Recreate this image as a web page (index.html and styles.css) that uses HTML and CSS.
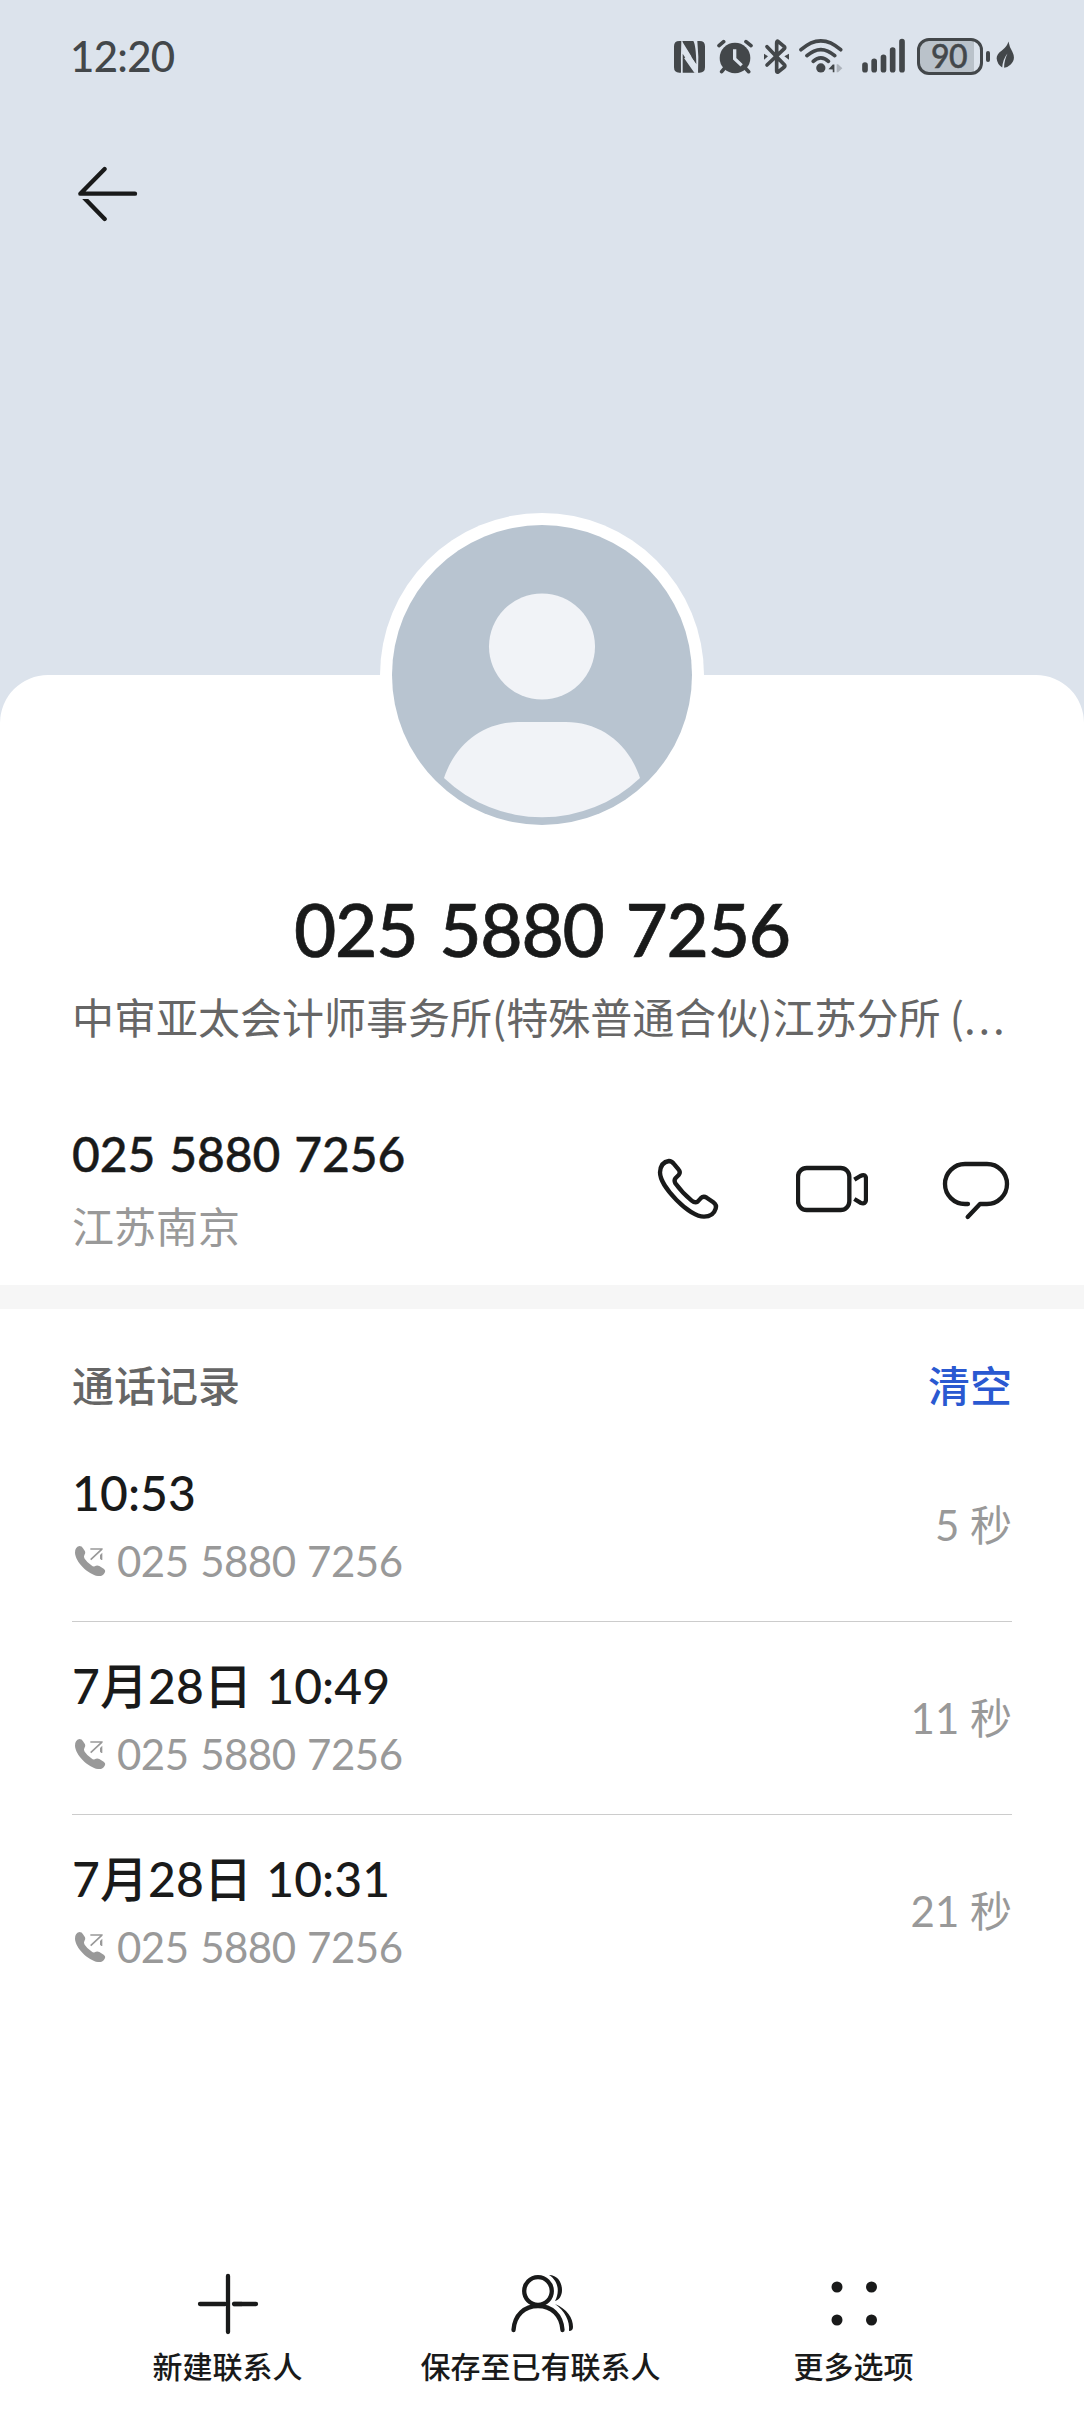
FILE: index.html
```html
<!DOCTYPE html>
<html lang="zh-CN">
  <head>
    <meta charset="UTF-8" />
    <meta name="viewport" content="width=device-width, initial-scale=1.0" />
    <title>通话记录</title>
    <link rel="stylesheet" href="styles.css">
  </head>
  <body>
    <!-- shared icon, one per call record -->
    <svg class="sprite" aria-hidden="true">
      <symbol id="call-out" viewBox="0 0 108 108">
        <path fill="currentColor" d="M22 9Q30 9 33 16L39 25Q42 32 37 37Q34 41 38 47Q46 59 58 67Q64 72 68 70Q75 65 82 69L95 77Q102 82 98 89Q92 101 78 99C48 94 10 57 9 29Q9 12 22 9Z" />
        <path fill="none" stroke="currentColor" stroke-width="5" d="M55 18H92M56 50L89 19" />
        <path fill="currentColor" d="M84 36L91 29V51H88L84 47Z" />
      </symbol>
    </svg>

    <header class="header">
      <div class="status-bar">
        <span class="clock">12:20</span>
        <div class="status-icons">
          <svg class="i-nfc" viewBox="0 0 93 114">
            <path d="M16 12H22Q20 60 21 107H16Q0 107 0 91V28Q0 12 16 12Z" />
            <path d="M25 12H58Q66 25 67 82L52 60V58L27 17Z" />
            <path d="M26 107V50L64 107Z" />
            <path class="cut" d="M34 38L66 88M33 62L64 106" />
            <path d="M70 12H77Q93 12 93 28V91Q93 107 77 107H72Q75 60 70 12Z" />
          </svg>
          <svg class="i-alarm" viewBox="0 0 108 114">
            <circle cx="54" cy="63" r="46" />
            <path class="line" stroke-width="11" d="M6 26L20 14M87 14L102 26M24 92L14 104M84 92L95 104" />
            <path class="cut" d="M53 37V65L74 85" />
          </svg>
          <svg class="i-bt" viewBox="0 0 75 114">
            <path class="line" stroke-width="11" d="M9 29L61 83Q64 87 61 90L42 105Q38 107 38 101V18Q38 10 43 14L60 28Q64 32 61 35L9 84" />
            <path d="M0 50L12 58L0 68ZM75 50L61 58L75 68Z" />
          </svg>
          <svg class="i-wifi" viewBox="0 0 133 114">
            <path class="line" stroke-width="11" d="M6 38Q66 -16 126 38M24 56Q66 19 108 56M43 73Q66 52 89 73" />
            <circle cx="66" cy="93" r="14" />
            <path d="M89 97L102 83H107V106H102V98Z" />
            <path class="faded" d="M114 82H118L131 94L118 106H114Z" />
          </svg>
          <svg class="i-signal" viewBox="0 0 128 114">
            <path class="line" stroke-width="17" d="M8.5 84V98M36 73V98M64 61V98M91.5 39V98M119.5 14V98" />
          </svg>
          <div class="battery"><span class="battery-level">90</span></div>
          <span class="battery-cap"></span>
          <svg class="i-leaf" viewBox="0 0 55 114">
            <path d="M38 13Q41 30 50 44Q62 68 44 84Q36 92 25 93Q24 73 35 49Q21 66 19 92Q4 84 2 65Q1 52 18 40Q34 29 38 13Z" />
          </svg>
        </div>
      </div>
      <svg class="back" viewBox="0 0 216 216">
        <clipPath id="below"><path d="M0 123H216V216H0Z" /></clipPath>
        <path d="M189 107H25L98 33" />
        <path clip-path="url(#below)" d="M25 108L98 183" />
      </svg>
    </header>

    <main class="sheet">
      <svg class="avatar" viewBox="0 0 324 324">
        <circle cx="162" cy="162" r="162" fill="#fff" />
        <circle cx="162" cy="162" r="150" fill="#b8c4d0" />
        <circle cx="162" cy="133.5" r="53" fill="#f1f3f7" />
        <path fill="#f1f3f7" d="M64 265C76 229 105 209 138 209H186C219 209 248 229 260 265A142 142 0 0 1 64 265Z" />
      </svg>

      <h1 class="title">025 5880 7256</h1>
      <p class="company">中审亚太会计师事务所(特殊普通合伙)江苏分所 (<span class="dots">...</span></p>

      <section class="phone">
        <div class="phone-info">
          <p class="phone-number">025 5880 7256</p>
          <p class="phone-place">江苏南京</p>
        </div>
        <div class="phone-actions">
          <svg viewBox="0 0 216 216">
            <path d="M51 24Q59 24 65 32L80 50Q87 58 80 66L71 75Q65 82 70 91Q90 119 119 143Q129 151 137 146L146 136Q154 128 164 134L184 148Q195 156 191 167Q184 191 156 191C112 191 24 102 24 58Q26 27 51 24Z" />
          </svg>
          <svg viewBox="0 0 216 216">
            <rect x="6" y="45" width="154" height="126" rx="26" />
            <path d="M175 80L193 69Q210 61 210 78V138Q210 156 193 149L175 138" stroke-linecap="butt" />
          </svg>
          <svg viewBox="0 0 216 216">
            <path d="M84 153H75A60 60 0 0 1 75 33H141A60 60 0 0 1 141 153H120L83 192" />
          </svg>
        </div>
      </section>

      <section class="records">
        <div class="records-head">
          <h2>通话记录</h2>
          <a class="clear">清空</a>
        </div>
        <ul>
          <li class="record">
            <div>
              <p class="record-time">10:53</p>
              <p class="record-number"><svg><use href="#call-out" /></svg>025 5880 7256</p>
            </div>
            <span class="duration">5 秒</span>
          </li>
          <li class="record">
            <div>
              <p class="record-time">7月28日 10:49</p>
              <p class="record-number"><svg><use href="#call-out" /></svg>025 5880 7256</p>
            </div>
            <span class="duration">11 秒</span>
          </li>
          <li class="record">
            <div>
              <p class="record-time">7月28日 10:31</p>
              <p class="record-number"><svg><use href="#call-out" /></svg>025 5880 7256</p>
            </div>
            <span class="duration">21 秒</span>
          </li>
        </ul>
      </section>
    </main>

    <nav class="toolbar">
      <a>
        <svg viewBox="0 0 72 72">
          <path d="M36 8V64M8 36H33" />
          <path d="M42 36H64" />
          <path d="M41 36H50" stroke-linecap="butt" />
        </svg>
        新建联系人
      </a>
      <a>
        <svg viewBox="0 0 72 72">
          <circle cx="33" cy="23" r="13.8" />
          <path d="M8.5 62C9.5 47 19.500 38 33 38S56.500 47 57.500 62" />
          <path class="solid" d="M44 7C53 7 57 15 57 22C57 28 54 32 50 33C54 26 55 14 44 7Z" />
          <path class="solid" d="M50 36C62 41 68 50 68 59Q68 63 64 63C65 53 60 43 50 36Z" />
        </svg>
        保存至已有联系人
      </a>
      <a>
        <svg viewBox="0 0 72 72">
          <g class="solid">
            <circle cx="19" cy="19" r="5.5" />
            <circle cx="53.5" cy="19" r="5.5" />
            <circle cx="19" cy="52" r="5.5" />
            <circle cx="53.5" cy="52" r="5.5" />
          </g>
        </svg>
        更多选项
      </a>
    </nav>
  </body>
</html>
```
FILE: styles.css
```css
:root {
  --header-color: #dce3ec;
  --status-color: #43474a;
  --text-color: #191a1a;
  --second-color: #666;
  --third-color: #999;
  --link-color: #2a59d1;
}

*,
*::before,
*::after {
  box-sizing: border-box;
}

body {
  margin: 0;
  height: 2412px;
  display: flex;
  flex-direction: column;
  background-color: var(--header-color);
  color: var(--text-color);
  font-family: Lato, "Noto Sans CJK SC", sans-serif;
  font-size: 42px;
}

h1,
h2,
p,
ul {
  margin: 0;
  padding: 0;
  font-weight: 400;
  list-style: none;
}

svg {
  display: block;
  flex: none;
}

.sprite {
  position: absolute;
  width: 0;
  height: 0;
}

/* header */
.header {
  height: 675px;
  padding-top: 28px;
}

.status-bar {
  display: flex;
  align-items: center;
  justify-content: space-between;
  height: 56px;
  padding: 0 70px;
  color: var(--status-color);
}

.clock {
  font-weight: 500;
  line-height: 58px;
  letter-spacing: -0.7px;
}

.status-icons {
  display: flex;
  align-items: center;
}

.status-icons svg {
  height: 38px;
  fill: var(--status-color);
}

.status-icons .line {
  fill: none;
  stroke: var(--status-color);
  stroke-linecap: round;
  stroke-linejoin: round;
}

.status-icons .cut {
  fill: none;
  stroke: var(--header-color);
  stroke-width: 6;
}

.status-icons .i-alarm .cut {
  stroke-width: 10;
}

.status-icons .faded {
  opacity: 0.3;
}

.i-nfc {
  width: 31px;
  margin-right: 12px;
}

.i-alarm {
  width: 36px;
  margin-right: 11px;
}

.i-bt {
  width: 25px;
  margin-right: 10px;
}

.i-wifi {
  width: 44px;
  margin-right: 19px;
}

.i-signal {
  width: 43px;
  margin-right: 12px;
}

.i-leaf {
  width: 18px;
}

.battery {
  width: 66px;
  height: 37px;
  border: 3px solid var(--status-color);
  border-radius: 12px;
  background: linear-gradient(to right, #bac2ca 54px, transparent 54px);
}

.battery-level {
  display: block;
  width: 58px;
  text-align: center;
  font-size: 32px;
  font-weight: 500;
  line-height: 30px;
  letter-spacing: -0.5px;
  -webkit-text-stroke: 0.5px;
}

.battery-cap {
  width: 4px;
  height: 11px;
  margin: 0 6px 0 3px;
  border-radius: 2px;
  background-color: var(--status-color);
}

.back {
  width: 72px;
  height: 72px;
  margin: 74px 0 0 72px;
}

.back,
.phone-actions svg {
  fill: none;
  stroke: var(--text-color);
  stroke-width: 13;
  stroke-linecap: round;
  stroke-linejoin: round;
}

/* contact */
.sheet {
  flex: 1;
  display: flex;
  flex-direction: column;
  border-radius: 48px 48px 0 0;
  background-color: #fff;
}

.avatar {
  width: 324px;
  height: 324px;
  margin: -162px auto 0;
}

.title {
  margin-top: 47px;
  font-size: 73px;
  font-weight: 500;
  line-height: 90px;
  text-align: center;
  letter-spacing: -1.2px;
  word-spacing: 4.5px;
  -webkit-text-stroke: 0.7px;
}

.company {
  margin: 12px 72px 0 72px;
  color: var(--second-color);
  font-family: "Noto Sans CJK SC", sans-serif;
  line-height: 60px;
  white-space: nowrap;
}

.dots {
  letter-spacing: 2.8px;
}

.phone {
  display: flex;
  align-items: center;
  justify-content: space-between;
  height: 263px;
  padding: 46px 72px 0;
  border-bottom: 24px solid #f6f6f6;
}

.phone-info {
  padding-top: 5px;
}

.phone-number {
  font-size: 48px;
  font-weight: 500;
  line-height: 72px;
  letter-spacing: -0.1px;
  word-spacing: 2px;
  -webkit-text-stroke: 0.4px;
}

.phone-place {
  color: var(--third-color);
  line-height: 74px;
}

.phone-actions {
  display: flex;
  gap: 72px;
}

.phone-actions svg {
  width: 72px;
  height: 72px;
}

/* call records */
.records {
  padding: 47px 72px 0;
}

.records-head {
  display: flex;
  justify-content: space-between;
  height: 73px;
  line-height: 60px;
}

.records-head h2 {
  color: var(--second-color);
  font-size: 42px;
  font-weight: 500;
}

.clear {
  color: var(--link-color);
  font-weight: 500;
}

.record {
  display: flex;
  align-items: center;
  justify-content: space-between;
  height: 193px;
  border-bottom: 1px solid #ccc;
}

.record:last-child {
  border-bottom-color: transparent;
}

.record-time {
  font-size: 48px;
  font-weight: 500;
  line-height: 72px;
  word-spacing: 2px;
  letter-spacing: 0.1px;
}

.record-number {
  display: flex;
  align-items: center;
  gap: 9px;
  color: var(--third-color);
  line-height: 64px;
  letter-spacing: -0.5px;
  word-spacing: 1.3px;
}

.record-number svg {
  width: 36px;
  height: 36px;
}

.duration {
  padding-bottom: 6px;
  color: var(--third-color);
}

/* bottom toolbar */
.toolbar {
  display: grid;
  grid-template-columns: repeat(3, 1fr);
  height: 144px;
  padding: 0 74px 0 71px;
  background-color: #fff;
}

.toolbar a {
  display: flex;
  flex-direction: column;
  align-items: center;
  gap: 4px;
  font-size: 30px;
  font-weight: 500;
  line-height: 44px;
  white-space: nowrap;
}

.toolbar svg {
  width: 72px;
  height: 72px;
  fill: none;
  stroke: var(--text-color);
  stroke-width: 4.3;
  stroke-linecap: round;
}

.toolbar .solid {
  fill: var(--text-color);
  stroke: none;
}
```
